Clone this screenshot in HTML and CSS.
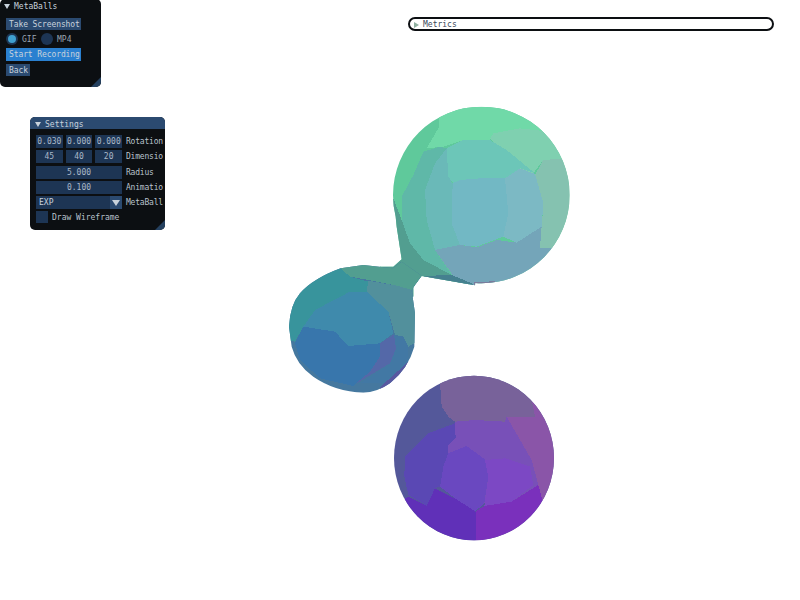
FILE: index.html
```html
<!DOCTYPE html>
<html lang="en">
<head>
  <meta charset="UTF-8" />
  <title>MetaBalls</title>
  <link rel="stylesheet" href="styles.css">
</head>
<body>

  <svg class="scene" width="800" height="600" viewBox="0 0 800 600">
    <!-- coordinates are 3x, measured from the crops -->
    <defs>
      <clipPath id="clipBig">
        <circle cx="304" cy="285" r="265"/>
        <polygon points="40,280 50,380 65,478 40,500 0,500 0,590 100,590 100,560 125,528 285,556 300,400"/>
      </clipPath>
      <clipPath id="clipSmall">
        <path d="M27 260 Q30 195 60 160 Q100 115 182 85 L250 75 L338 85 L365 65 L425 107 L395 150 L405 220 L403 320 Q385 385 330 430 Q290 458 250 458 Q165 455 100 410 Q50 375 35 320 Z"/>
      </clipPath>
      <clipPath id="clipPurple">
        <ellipse cx="267" cy="264" rx="240" ry="247"/>
      </clipPath>
    </defs>

    <g transform="translate(380 100) scale(.3333)">
      <g clip-path="url(#clipBig)">
        <rect x="-10" y="-10" width="620" height="620" fill="#5fc99b"/>
        <polygon fill="#70d9a8" points="178,55 178,0 600,0 600,88 480,92 420,85 340,100 330,120 250,120 190,140 140,145 178,80"/>
        <polygon fill="#7fd0b0" points="480,92 600,88 600,172 490,180 460,220 420,205 330,115 340,100 420,85"/>
        <polygon fill="#85c2b0" points="490,180 600,172 600,445 480,445 485,380 490,320 465,225"/>
        <polygon fill="#5fb8a8" points="180,140 130,155 100,225 65,290 65,360 90,430 130,480 215,525 165,450 140,360 135,270 165,190 200,145"/>
        <polygon fill="#6ab9b8" points="200,145 165,190 135,270 140,360 165,450 240,435 215,370 218,250 205,230"/>
        <polygon fill="#6cc6b8" points="200,145 250,120 330,120 380,150 465,220 420,205 375,235 300,235 240,240 220,250 205,230"/>
        <polygon fill="#72b8c4" points="218,250 240,240 300,235 375,235 385,340 370,410 290,440 240,435 215,370"/>
        <polygon fill="#7cb9c4" points="375,235 420,205 465,222 490,310 485,380 410,428 370,410 385,340"/>
        <polygon fill="#74a5b9" points="165,450 240,435 290,442 350,420 410,428 485,380 480,445 600,437 600,600 270,600 215,522"/>
        <polygon fill="#529e90" points="0,280 40,295 65,360 90,430 130,480 215,525 270,556 270,600 0,600"/>
        <polygon fill="#45808f" points="125,528 215,525 280,552 270,560"/>
        <polygon fill="#7a7c9c" points="280,546 345,544 345,560 285,560"/>
        <polygon fill="#52909c" points="0,545 60,560 100,550 100,590 0,590"/>
      </g>
    </g>

    <g transform="translate(280 240) scale(.3333)">
      <g clip-path="url(#clipSmall)">
        <rect x="0" y="0" width="480" height="480" fill="#45789f"/>
        <polygon fill="#529e90" points="150,60 250,60 338,85 365,65 355,0 480,0 480,110 425,107 395,150 355,138 265,120 210,110 182,85"/>
        <polygon fill="#38949c" points="182,85 210,110 265,125 260,155 210,155 105,210 70,260 45,305 0,295 0,60 150,60"/>
        <polygon fill="#52909c" points="265,122 355,138 395,150 420,150 420,300 385,320 370,290 345,285 325,215 260,155"/>
        <polygon fill="#3f8aac" points="105,210 210,155 260,155 325,215 340,280 300,310 205,318 165,275 70,260"/>
        <polygon fill="#3876ac" points="70,260 165,275 205,318 300,310 300,350 270,395 220,438 120,415 60,360 45,310"/>
        <polygon fill="#4278a4" points="340,285 370,290 385,320 385,365 320,430 240,430 330,370 345,325"/>
        <polygon fill="#5468a8" points="300,310 342,283 348,325 330,370 222,435 270,395 300,350"/>
        <polygon fill="#5858a0" points="385,365 420,330 420,400 310,470 300,442"/>
      </g>
    </g>

    <g transform="translate(385 370) scale(.3333)">
      <g clip-path="url(#clipPurple)">
        <rect x="0" y="0" width="540" height="540" fill="#54589a"/>
        <polygon fill="#78629a" points="165,35 165,0 540,0 540,90 440,90 450,140 365,140 360,155 270,150 210,155 190,140 170,110"/>
        <polygon fill="#7850b8" points="210,155 270,150 360,155 365,140 440,270 460,345 380,395 298,400 190,250 188,228 212,205"/>
        <polygon fill="#8a55a8" points="440,90 450,140 365,140 440,270 460,345 472,390 540,390 540,90"/>
        <polygon fill="#5a48b4" points="210,160 130,190 60,260 58,320 70,375 125,408 150,355 165,350 175,290 190,250 188,228 212,205"/>
        <polygon fill="#6a48c0" points="190,250 245,228 300,268 310,320 298,400 270,425 210,385 165,350 175,290"/>
        <polygon fill="#7c48c4" points="300,270 360,265 435,290 445,345 380,395 298,408 310,320"/>
        <polygon fill="#6030b8" points="70,380 125,408 150,355 210,385 272,425 272,540 40,540 40,395"/>
        <polygon fill="#7a30bc" points="272,425 298,408 380,395 460,345 472,390 540,390 540,540 272,540"/>
      </g>
    </g>
  </svg>

  <div class="window window-main">
    <div class="title"><span class="arrow"></span>MetaBalls</div>
    <div class="body">
      <div class="btn">Take Screenshot</div>
      <div class="radio-row">
        <span class="radio on"></span><span class="radio-label">GIF</span>
        <span class="radio"></span><span class="radio-label">MP4</span>
      </div>
      <div class="btn btn-active">Start Recording</div>
      <div class="btn btn-small">Back</div>
    </div>
    <span class="grip"></span>
  </div>

  <div class="window window-settings">
    <div class="title title-focus"><span class="arrow"></span>Settings</div>
    <div class="body">
      <div class="row">
        <div class="fields">
          <div class="field">0.030</div><div class="field">0.000</div><div class="field">0.000</div>
        </div>
        <span class="label">Rotation</span>
      </div>
      <div class="row">
        <div class="fields">
          <div class="field">45</div><div class="field">40</div><div class="field">20</div>
        </div>
        <span class="label">Dimensio</span>
      </div>
      <div class="row">
        <div class="fields"><div class="field">5.000</div></div>
        <span class="label">Radius</span>
      </div>
      <div class="row">
        <div class="fields"><div class="field">0.100</div></div>
        <span class="label">Animatio</span>
      </div>
      <div class="row">
        <div class="fields">
          <div class="combo">EXP<span class="combo-btn"><span class="arrow"></span></span></div>
        </div>
        <span class="label">MetaBall</span>
      </div>
      <div class="check-row">
        <span class="check"></span>Draw Wireframe
      </div>
    </div>
    <span class="grip"></span>
  </div>

  <div class="metrics"><span class="arrow-right"></span>Metrics</div>

</body>
</html>
```

FILE: styles.css
```css
* { box-sizing: border-box; }

body {
  margin: 0;
  width: 800px;
  height: 600px;
  overflow: hidden;
  background: #ffffff;
  font-family: "DejaVu Sans Mono", "Liberation Mono", monospace;
  font-size: 8px;
  color: #c8d2dc;
}

.scene {
  position: absolute;
  left: 0;
  top: 0;
  shape-rendering: crispEdges;
}

.window {
  position: absolute;
  background: #0c0f12;
  border-radius: 5px;
  overflow: hidden;
}

.window-main {
  left: 0;
  top: -1px;
  width: 101px;
  height: 88px;
}

.window-settings {
  left: 30px;
  top: 117px;
  width: 135px;
  height: 113px;
}

.title {
  height: 13px;
  padding: 2px 0 0 4px;
  display: flex;
  align-items: center;
  gap: 4px;
}

.title-focus {
  height: 12px;
  padding-left: 5px;
  background: #2b4a70;
}

.arrow {
  width: 0;
  height: 0;
  border-left: 3px solid transparent;
  border-right: 3px solid transparent;
  border-top: 5px solid #c8d2dc;
}

.body {
  padding: 6px;
  display: flex;
  flex-direction: column;
  align-items: flex-start;
}

.btn {
  width: 75px;
  height: 12px;
  padding: 1px 0 0 3px;
  background: #2b4a70;
  line-height: 12px;
  letter-spacing: -.1px;
  white-space: nowrap;
}

.btn-active {
  height: 13px;
  background: #2a80d0;
}

.btn-small {
  width: 24px;
  margin-top: 3px;
}

.radio-row {
  height: 12px;
  margin: 3px 0;
  display: flex;
  align-items: center;
}

.radio {
  width: 12px;
  height: 12px;
  border-radius: 50%;
  background: #1d3554;
  display: flex;
  align-items: center;
  justify-content: center;
}

.radio.on::after {
  content: "";
  width: 8px;
  height: 8px;
  border-radius: 50%;
  background: #3fa0d0;
}

.radio-label {
  width: 17px;
  padding: 1px 0 0 4px;
  margin-right: 6px;
  color: #9aa6b2;
  white-space: nowrap;
}

.row {
  width: 100%;
  height: 13px;
  margin-bottom: 2.3px;
  display: flex;
  align-items: center;
  gap: 4px;
}

.fields {
  width: 86px;
  height: 13px;
  flex: none;
  display: flex;
  gap: 3px;
}

.field {
  flex: 1;
  background: #1d3554;
  color: #aab8c8;
  text-align: center;
  line-height: 13px;
}

.label {
  white-space: nowrap;
  color: #b8c2cc;
  letter-spacing: -.2px;
}

.combo {
  flex: 1;
  padding-left: 3px;
  background: #1d3554;
  line-height: 13px;
  display: flex;
  justify-content: space-between;
}

.combo-btn {
  width: 12px;
  background: #2b4a70;
  display: flex;
  align-items: center;
  justify-content: center;
}

.combo-btn .arrow {
  border-left-width: 4px;
  border-right-width: 4px;
  border-top-width: 6px;
}

.check-row {
  height: 12px;
  display: flex;
  align-items: center;
  gap: 4px;
  color: #b8c2cc;
}

.check {
  width: 12px;
  height: 12px;
  background: #1d3554;
}

.grip {
  position: absolute;
  right: 0;
  bottom: 0;
  width: 0;
  height: 0;
  border-left: 10px solid transparent;
  border-bottom: 10px solid #24405f;
}

.metrics {
  position: absolute;
  left: 408px;
  top: 17px;
  width: 366px;
  height: 14px;
  padding: 1px 0 0 4px;
  background: #ffffff;
  border: 2px solid #0c0f12;
  border-radius: 7px;
  color: #3a4a5a;
  line-height: 10px;
  display: flex;
  align-items: center;
  gap: 4px;
}

.arrow-right {
  width: 0;
  height: 0;
  border-top: 3px solid transparent;
  border-bottom: 3px solid transparent;
  border-left: 5px solid #8fb0a0;
}
```
